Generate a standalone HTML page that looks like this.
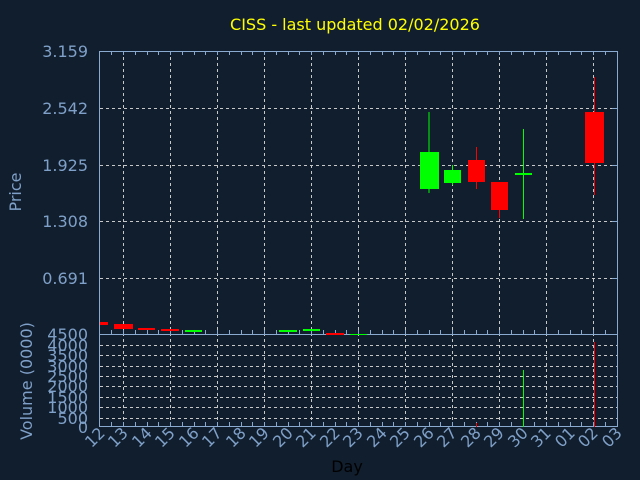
<!DOCTYPE html>
<html><head><meta charset="utf-8"><style>
html,body{margin:0;padding:0;background:#111e2e;}
svg{display:block}
text{font-family:"DejaVu Sans","Liberation Sans",sans-serif;}
</style></head><body>
<svg width="640" height="480" viewBox="0 0 640 480" xmlns="http://www.w3.org/2000/svg">
<rect width="640" height="480" fill="#111e2e"/>
<text x="355" y="30" fill="#ffff00" font-size="16" text-anchor="middle">CISS - last updated 02/02/2026</text>
<g stroke="#c8c8c8" stroke-width="1" stroke-dasharray="3,3" fill="none">
<path d="M100 108.5H617M100 165.5H617M100 221.5H617M100 278.5H617"/>
<path d="M100 345.5H617M100 355.5H617M100 366.5H617M100 376.5H617M100 386.5H617M100 397.5H617M100 407.5H617M100 418.5H617"/>
<path d="M123.5 51V427M170.5 51V427M217.5 51V427M264.5 51V427M311.5 51V427M358.5 51V427M405.5 51V427M452.5 51V427M499.5 51V427M546.5 51V427M593.5 51V427"/>
</g>
<g stroke="#8aaad0" stroke-width="1" fill="none">
<path d="M99.5 51.5H617.5V426.5H99.5Z"/>
<path d="M99.5 334.5H617.5"/>
<path d="M111.5 51v4M123.5 51v4M135.5 51v4M147.5 51v4M158.5 51v4M170.5 51v4M182.5 51v4M194.5 51v4M205.5 51v4M217.5 51v4M229.5 51v4M241.5 51v4M252.5 51v4M264.5 51v4M276.5 51v4M288.5 51v4M299.5 51v4M311.5 51v4M323.5 51v4M335.5 51v4M346.5 51v4M358.5 51v4M370.5 51v4M382.5 51v4M393.5 51v4M405.5 51v4M417.5 51v4M429.5 51v4M440.5 51v4M452.5 51v4M464.5 51v4M476.5 51v4M487.5 51v4M499.5 51v4M511.5 51v4M523.5 51v4M534.5 51v4M546.5 51v4M558.5 51v4M570.5 51v4M581.5 51v4M593.5 51v4M605.5 51v4"/>
<path d="M111.5 334v-4M123.5 334v-4M135.5 334v-4M147.5 334v-4M158.5 334v-4M170.5 334v-4M182.5 334v-4M194.5 334v-4M205.5 334v-4M217.5 334v-4M229.5 334v-4M241.5 334v-4M252.5 334v-4M264.5 334v-4M276.5 334v-4M288.5 334v-4M299.5 334v-4M311.5 334v-4M323.5 334v-4M335.5 334v-4M346.5 334v-4M358.5 334v-4M370.5 334v-4M382.5 334v-4M393.5 334v-4M405.5 334v-4M417.5 334v-4M429.5 334v-4M440.5 334v-4M452.5 334v-4M464.5 334v-4M476.5 334v-4M487.5 334v-4M499.5 334v-4M511.5 334v-4M523.5 334v-4M534.5 334v-4M546.5 334v-4M558.5 334v-4M570.5 334v-4M581.5 334v-4M593.5 334v-4M605.5 334v-4"/>
<path d="M111.5 426v-4M123.5 426v-4M135.5 426v-4M147.5 426v-4M158.5 426v-4M170.5 426v-4M182.5 426v-4M194.5 426v-4M205.5 426v-4M217.5 426v-4M229.5 426v-4M241.5 426v-4M252.5 426v-4M264.5 426v-4M276.5 426v-4M288.5 426v-4M299.5 426v-4M311.5 426v-4M323.5 426v-4M335.5 426v-4M346.5 426v-4M358.5 426v-4M370.5 426v-4M382.5 426v-4M393.5 426v-4M405.5 426v-4M417.5 426v-4M429.5 426v-4M440.5 426v-4M452.5 426v-4M464.5 426v-4M476.5 426v-4M487.5 426v-4M499.5 426v-4M511.5 426v-4M523.5 426v-4M534.5 426v-4M546.5 426v-4M558.5 426v-4M570.5 426v-4M581.5 426v-4M593.5 426v-4M605.5 426v-4"/>
<path d="M612 108.5h5M612 165.5h5M612 221.5h5M612 278.5h5"/>
</g>
<!-- candles -->
<g>
<rect x="100" y="322" width="8" height="3" fill="#ff0000"/>
<rect x="114" y="324" width="19" height="5" fill="#ff0000"/>
<rect x="138" y="328" width="17" height="2" fill="#ff0000"/>
<rect x="161" y="329" width="18" height="2" fill="#ff0000"/>
<rect x="185" y="330" width="17" height="2" fill="#00ff00"/>
<rect x="279" y="330" width="18" height="2" fill="#00ff00"/>
<rect x="303" y="329" width="17" height="2" fill="#00ff00"/>
<rect x="326" y="333" width="18" height="2" fill="#ff0000"/>
<rect x="350" y="334" width="17" height="1" fill="#00ff00"/>
<rect x="428.5" y="112" width="1" height="81" fill="#00ff00"/>
<rect x="420" y="152" width="19" height="37" fill="#00ff00"/>
<rect x="452" y="165" width="1" height="20" fill="#00ff00"/>
<rect x="444" y="170" width="17" height="13" fill="#00ff00"/>
<rect x="476" y="147" width="1" height="42" fill="#ff0000"/>
<rect x="468" y="160" width="17" height="22" fill="#ff0000"/>
<rect x="499" y="182" width="1" height="36" fill="#ff0000"/>
<rect x="491" y="182" width="17" height="28" fill="#ff0000"/>
<rect x="523" y="129" width="1" height="90" fill="#00ff00"/>
<rect x="515" y="173" width="17" height="2" fill="#00ff00"/>
<rect x="594" y="77" width="1" height="118" fill="#ff0000"/>
<rect x="585" y="112" width="19" height="51" fill="#ff0000"/>
<!-- volume -->
<rect x="476" y="423" width="1" height="4" fill="#ff0000"/>
<rect x="523" y="370" width="1" height="57" fill="#00ff00"/>
<rect x="594" y="342" width="1" height="85" fill="#ff0000"/>
</g>
<g fill="#7fa0c8" font-size="16" text-anchor="end">
<text x="88" y="57">3.159</text>
<text x="88" y="114">2.542</text>
<text x="88" y="171">1.925</text>
<text x="88" y="227">1.308</text>
<text x="88" y="284">0.691</text>
<text x="88" y="340">4500</text>
<text x="88" y="351">4000</text>
<text x="88" y="361">3500</text>
<text x="88" y="372">3000</text>
<text x="88" y="382">2500</text>
<text x="88" y="392">2000</text>
<text x="88" y="403">1500</text>
<text x="88" y="413">1000</text>
<text x="88" y="424">500</text>
<text x="88" y="433">0</text>
</g>
<text transform="translate(21,192) rotate(-90)" fill="#7fa0c8" font-size="16" text-anchor="middle">Price</text>
<text transform="translate(32,381) rotate(-90)" fill="#7fa0c8" font-size="16" text-anchor="middle">Volume (0000)</text>
<g fill="#7fa0c8" font-size="16" text-anchor="end">
<text transform="translate(106,434) rotate(-45)">12</text>
<text transform="translate(129,434) rotate(-45)">13</text>
<text transform="translate(153,434) rotate(-45)">14</text>
<text transform="translate(176,434) rotate(-45)">15</text>
<text transform="translate(200,434) rotate(-45)">16</text>
<text transform="translate(223,434) rotate(-45)">17</text>
<text transform="translate(247,434) rotate(-45)">18</text>
<text transform="translate(270,434) rotate(-45)">19</text>
<text transform="translate(294,434) rotate(-45)">20</text>
<text transform="translate(317,434) rotate(-45)">21</text>
<text transform="translate(341,434) rotate(-45)">22</text>
<text transform="translate(364,434) rotate(-45)">23</text>
<text transform="translate(388,434) rotate(-45)">24</text>
<text transform="translate(411,434) rotate(-45)">25</text>
<text transform="translate(435,434) rotate(-45)">26</text>
<text transform="translate(458,434) rotate(-45)">27</text>
<text transform="translate(482,434) rotate(-45)">28</text>
<text transform="translate(505,434) rotate(-45)">29</text>
<text transform="translate(529,434) rotate(-45)">30</text>
<text transform="translate(552,434) rotate(-45)">31</text>
<text transform="translate(576,434) rotate(-45)">01</text>
<text transform="translate(599,434) rotate(-45)">02</text>
<text transform="translate(623,434) rotate(-45)">03</text>
</g>
<text x="347" y="472" fill="#000000" font-size="16" text-anchor="middle">Day</text>
</svg>
</body></html>
